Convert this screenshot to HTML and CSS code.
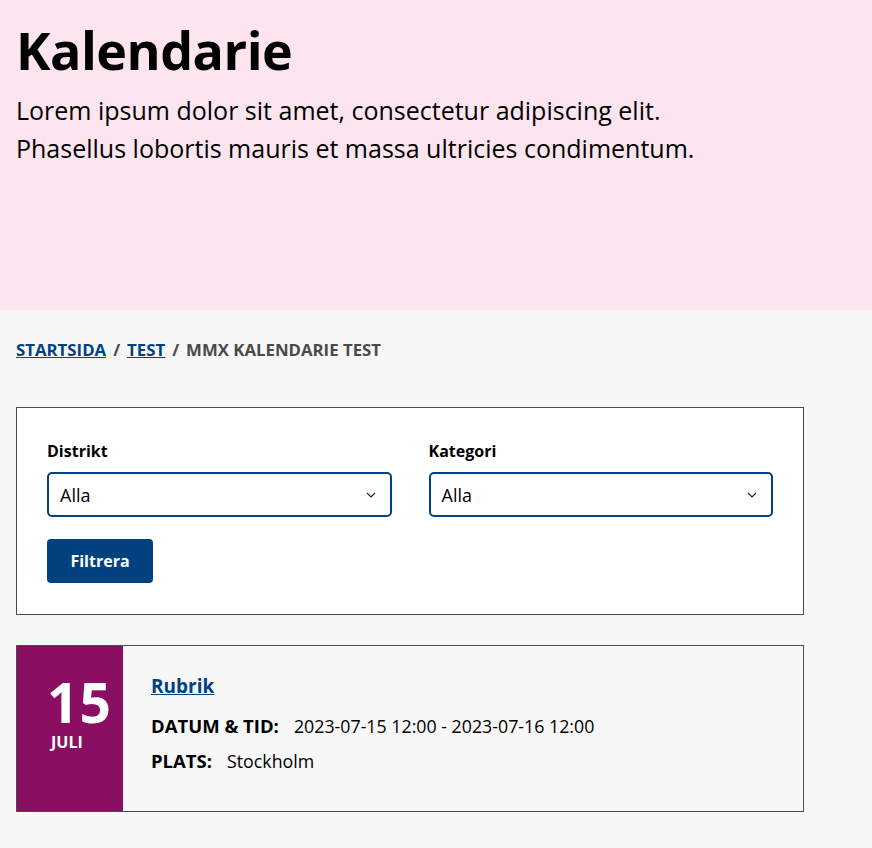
FILE: index.html
```html
<!DOCTYPE html>
<html lang="sv">
<head>
<meta charset="utf-8">
<title>Kalendarie</title>
<link rel="stylesheet" href="styles.css">
</head>
<body>
<header class="hero">
  <h1 class="hero-title">Kalendarie</h1>
  <p class="hero-text">Lorem ipsum dolor sit amet, consectetur adipiscing elit.<br>Phasellus lobortis mauris et massa ultricies condimentum.</p>
</header>
<main class="main">
  <nav class="breadcrumb">
    <a href="#">Startsida</a><span class="sep">/</span><a href="#">Test</a><span class="sep">/</span><span class="current">MMX Kalendarie test</span>
  </nav>
  <form class="filter">
    <div class="filter-grid">
      <div class="field">
        <label class="field-label">Distrikt</label>
        <div class="select">
          <span>Alla</span>
          <svg class="chevron" width="10" height="6" viewBox="0 0 10 6"><path d="M1 1l4 4 4-4" fill="none" stroke="#222" stroke-width="1.2"/></svg>
        </div>
      </div>
      <div class="field">
        <label class="field-label">Kategori</label>
        <div class="select">
          <span>Alla</span>
          <svg class="chevron" width="10" height="6" viewBox="0 0 10 6"><path d="M1 1l4 4 4-4" fill="none" stroke="#222" stroke-width="1.2"/></svg>
        </div>
      </div>
    </div>
    <button type="button" class="btn">Filtrera</button>
  </form>
  <article class="event">
    <div class="event-date">
      <span class="day">15</span>
      <span class="month">Juli</span>
    </div>
    <div class="event-body">
      <a href="#" class="event-title">Rubrik</a>
      <p class="event-row"><strong>Datum &amp; tid:</strong><span>2023-07-15 12:00 - 2023-07-16 12:00</span></p>
      <p class="event-row"><strong>Plats:</strong><span>Stockholm</span></p>
    </div>
  </article>
</main>
</body>
</html>
```
FILE: styles.css
```css
* { box-sizing: border-box; }
html, body { margin: 0; }
body {
  background: #f7f7f7;
  font-family: "Open Sans", "Noto Sans", sans-serif;
  color: #000;
}
.hero {
  background: #fde5ef;
  height: 310px;
  padding: 19px 16px 0;
}
.hero-title {
  margin: 0;
  font-size: 52px;
  line-height: 62px;
  font-weight: 700;
  letter-spacing: -0.5px;
}
.hero-text {
  margin: 10px 0 0;
  font-size: 25px;
  line-height: 38px;
}
.main {
  padding: 0 16px 0;
  width: 820px;
}
.breadcrumb {
  margin-top: 29px;
  font-size: 16.8px;
  font-weight: 700;
  text-transform: uppercase;
  color: #4a4a4a;
  line-height: 22px;
}
.breadcrumb a { color: #00417f; }
.sep { margin: 0 7px; }
.filter {
  margin-top: 46px;
  background: #fff;
  border: 1px solid #4a4a4a;
  padding: 30px 30px 31px;
}
.filter-grid {
  display: grid;
  grid-template-columns: 1fr 1fr;
  column-gap: 37px;
}
.field-label {
  display: block;
  font-size: 16px;
  font-weight: 700;
  line-height: 26px;
  margin-bottom: 8px;
}
.select {
  height: 45px;
  border: 2px solid #00417f;
  border-radius: 5px;
  background: #fff;
  display: flex;
  align-items: center;
  justify-content: space-between;
  padding: 0 14px 0 11px;
  font-size: 18px;
}
.btn {
  margin-top: 22px;
  height: 44px;
  width: 106px;
  border: 0;
  border-radius: 4px;
  background: #00417f;
  color: #fff;
  font-family: inherit;
  font-size: 16px;
  font-weight: 700;
}
.event {
  margin-top: 30px;
  display: flex;
  border: 1px solid #4a4a4a;
  height: 167px;
  background: #f7f7f7;
}
.event-date {
  width: 106px;
  flex: none;
  background: #8a0f63;
  color: #fff;
  display: flex;
  flex-direction: column;
  align-items: flex-start;
  padding: 30px 0 0 30px;
  font-weight: 700;
}
.day { font-size: 55px; line-height: 52px; letter-spacing: 1px; }
.month { font-size: 16px; text-transform: uppercase; line-height: 20px; margin-top: 4px; padding-left: 4px; }
.event-body {
  padding: 26px 28px;
}
.event-title {
  display: inline-block;
  color: #00417f;
  font-size: 19px;
  font-weight: 700;
  line-height: 28px;
}
.event-row {
  margin: 0;
  font-size: 17.8px;
  line-height: 24px;
  margin-top: 11px;
}
.event-title + .event-row { margin-top: 14px; }
.event-row strong { text-transform: uppercase; margin-right: 15px; font-size: 18.5px; }
```
